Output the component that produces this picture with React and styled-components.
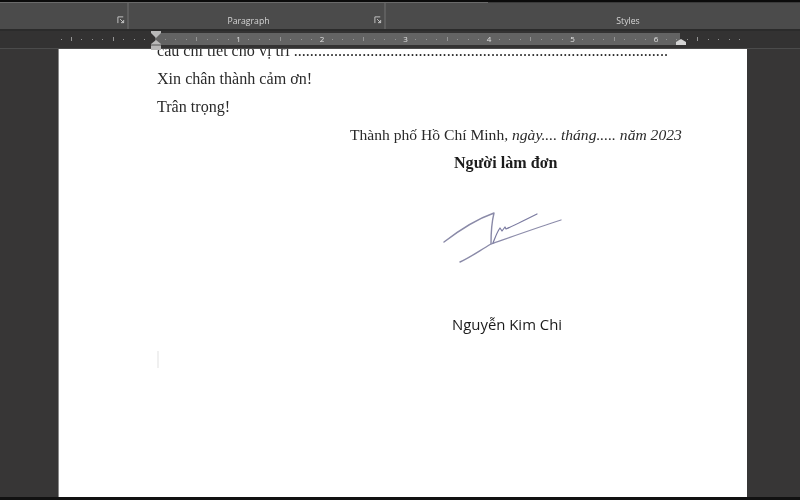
import React from "react";
import styled, { createGlobalStyle } from "styled-components";

const Global = createGlobalStyle`
  html, body { margin: 0; padding: 0; background: #373636; }
  #root { width: 800px; height: 500px; overflow: hidden; }
`;

const Screen = styled.div`
  width: 800px; height: 500px; display: flex; flex-direction: column;
  background: #373636; overflow: hidden; position: relative; filter: blur(0.35px);
`;
const TopStrip = styled.div`
  height: 3px; flex: none;
  background: linear-gradient(#0b0b0b 2px, transparent 2px),
    linear-gradient(to right, #6a6a6a 488px, #3a3a3a 488px);
`;
const Ribbon = styled.div`
  flex: none; height: 26px; display: flex; background: #4b4b4b;
  font-family: "Open Sans", "Liberation Sans", sans-serif; font-size: 8.7px; color: #d6d6d6;
`;
const RibbonGroup = styled.div`
  width: ${p => p.$w}px; flex: none; box-sizing: border-box; position: relative;
  display: flex; justify-content: center; align-items: flex-end;
  padding: 0 ${p => p.$pr || 0}px 2px ${p => p.$pl || 0}px;
  border-right: ${p => (p.$sep ? "2px solid #5e5e5e" : "none")};
`;
const Launcher = styled.svg`
  position: absolute; right: 2px; bottom: 5px; width: 8px; height: 8px;
`;
const RibbonEdge = styled.div`
  height: 2px; flex: none; background: #2b2b2b;
`;
const Ruler = styled.div`
  height: 18px; flex: none; padding-top: 2px; box-sizing: border-box; background: #333232;
  border-bottom: 1px solid #4b4b4b; position: relative; z-index: 1;
`;
const Track = styled.div`
  height: 12px; display: flex; align-items: center; padding-left: ${p => p.$pad}px;
  background: linear-gradient(to right, #333232 155px, #636363 155px, #636363 680px, #333232 680px);
`;
const TickCell = styled.div`
  flex: none; width: 10.44px; display: flex; justify-content: center; align-items: center;
  font-family: "Open Sans", "Liberation Sans", sans-serif; font-size: 8px; line-height: 12px; color: #e2e2e2;
`;
const Dot = styled.i`
  display: block; width: 1px; height: ${p => (p.$tall ? 4 : 1)}px; background: #949494;
`;
const Indent = styled.svg`
  position: absolute; top: ${p => p.$top}px; left: ${p => p.$left}px;
  width: 10px; height: ${p => p.$h}px;
`;
const Workspace = styled.div`
  flex: 1; min-height: 0; padding: 0 53px 3px 58px; background: #373636; display: flex;
`;
const Page = styled.div`
  flex: 1; background: #fff; overflow: hidden; padding-left: 98px; color: #2a2a2a;
  font-family: "Liberation Serif", "Times New Roman", serif; font-size: 16.1px;
  border-left: 1px solid #8a8a8a; box-sizing: border-box;
`;
const BottomLine = styled.div`
  position: absolute; left: 0; right: 0; bottom: 0; height: 3px; background: #111;
`;
const Para = styled.p`
  margin: ${p => p.$mt || 0}px 0 0 ${p => p.$ml || 0}px; line-height: 18px; white-space: nowrap;
`;
const Clip = styled(Para)`
  margin-top: -7px;
`;
const DateLine = styled(Para)`
  font-size: 15.6px;
`;
const Italic = styled.em`
  font-style: italic;
`;
const Bold = styled.strong`
  font-weight: 700; color: #1c1c1c;
`;
const Signature = styled.svg`
  display: block; width: 130px; height: 80px; margin: 33px 0 0 286px;
`;
const SignedName = styled.p`
  margin: 29px 0 0 295px; font-family: "Open Sans", "Noto Sans", sans-serif; font-size: 14.9px;
  line-height: 20px; color: #1a1a1a; white-space: nowrap;
`;
const Caret = styled.div`
  width: 2px; height: 17px; background: #f0f0f0; margin-top: 17px;
`;

const launcher = (
  <>
    <path d="M1 8V1h6" fill="none" stroke="#cfcfcf" strokeWidth="1" />
    <path d="M3.5 3.5L7.5 7.5M7.5 4.5v3h-3" fill="none" stroke="#cfcfcf" strokeWidth="1" />
  </>
);

const LEFT_CELLS = 9;
const cells = [];
for (let i = -LEFT_CELLS; i < 57; i++) {
  const rem = ((i % 8) + 8) % 8;
  const num = i / 8;
  let content;
  if (rem === 0 && i > 0 && num <= 6) content = num;
  else if (rem === 0 && i < 0) content = <Dot $tall />;
  else if (rem === 4) content = <Dot $tall />;
  else if (i === 0) content = null;
  else content = <Dot />;
  cells.push(<TickCell key={i}>{content}</TickCell>);
}

export default function App() {
  return (
    <Screen>
      <Global />
      <TopStrip />
      <Ribbon>
        <RibbonGroup $w={129} $sep>
          <Launcher viewBox="0 0 9 9">{launcher}</Launcher>
        </RibbonGroup>
        <RibbonGroup $w={257} $pr={16} $sep>
          Paragraph
          <Launcher viewBox="0 0 9 9">{launcher}</Launcher>
        </RibbonGroup>
        <RibbonGroup $w={414} $pl={70}>
          <span>Styles</span>
        </RibbonGroup>
      </Ribbon>
      <RibbonEdge />
      <Ruler>
        <Track $pad={155 - (LEFT_CELLS + 0.5) * 10.44}>{cells}</Track>
        <Indent $top={0} $left={151} $h={7} viewBox="0 0 10 7">
          <path d="M0 0h10v2L5 7 0 2z" fill="#b9b9b9" />
        </Indent>
        <Indent $top={9} $left={151} $h={10} viewBox="0 0 10 10">
          <path d="M0 4l5-4 5 4v6H0z" fill="#b9b9b9" />
          <path d="M0 5h10" stroke="#555" strokeWidth="1" />
        </Indent>
        <Indent $top={8} $left={676} $h={6} viewBox="0 0 10 6">
          <path d="M0 6V3l5-3 5 3v3z" fill="#d4d4d4" />
        </Indent>
      </Ruler>
      <Workspace>
        <Page>
          <Clip>câu chi tiết cho vị trí .............................................................................................</Clip>
          <Para $mt={10}>Xin chân thành cảm ơn!</Para>
          <Para $mt={10}>Trân trọng!</Para>
          <DateLine $mt={10} $ml={193}>
            Thành phố Hồ Chí Minh<Italic>, ngày.... tháng..... năm 2023</Italic>
          </DateLine>
          <Para $mt={10} $ml={297}><Bold>Người làm đơn</Bold></Para>
          <Signature viewBox="0 0 130 80">
            <path d="M1 37C14 27 34 14 51 8C49 16 48 27 48 39C36 46 28 52 17 57" fill="none" stroke="#8a8aa8" strokeWidth="1.4" strokeLinecap="round" strokeLinejoin="round" />
            <path d="M48 39C68 32 96 22 118 15" fill="none" stroke="#8d8dab" strokeWidth="1.3" strokeLinecap="round" />
            <path d="M50 38C52 33 54 27 57 23L59 26 62 22 63 24C72 20 84 14 94 9" fill="none" stroke="#7a7aa0" strokeWidth="1.2" strokeLinecap="round" strokeLinejoin="round" />
          </Signature>
          <SignedName>Nguyễn Kim Chi</SignedName>
          <Caret />
        </Page>
      </Workspace>
      <BottomLine />
    </Screen>
  );
}
